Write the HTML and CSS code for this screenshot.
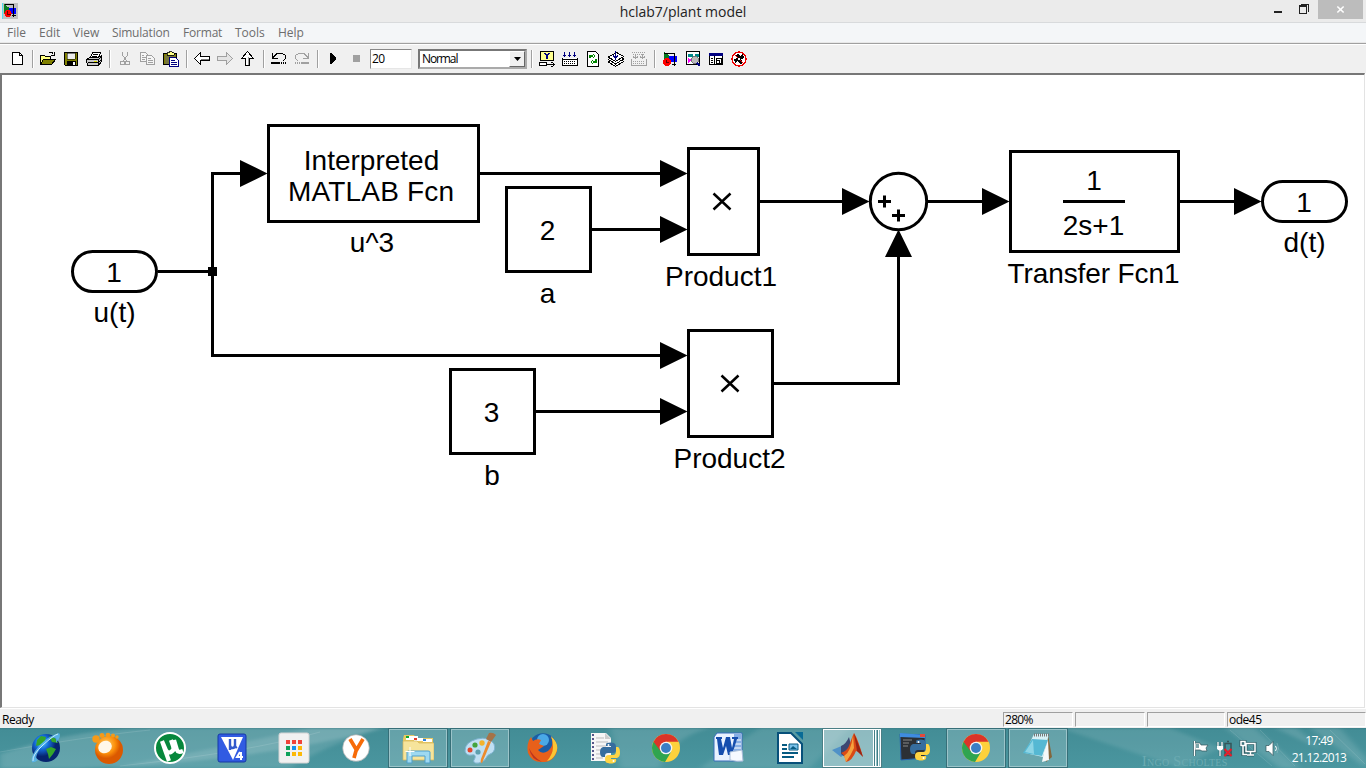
FILE: index.html
```html
<!DOCTYPE html>
<html lang="en">
<head>
<meta charset="utf-8">
<title>hclab7/plant model</title>
<link rel="stylesheet" href="styles.css">
</head>
<body>
<div class="desktop">
  <header class="titlebar">
    <svg class="app-icon" viewBox="0 0 16 16" shape-rendering="crispEdges"><path fill="#c0c0c0" d="M0 0h16v16H0z"/><path fill="#087a20" d="M2 1l7 5v5H2z"/><path fill="#00f" d="M7 5h7v6H7z"/><path fill="none" stroke="#000" d="M3 1.500h8.500V14M10 12.500h4"/><circle cx="6" cy="10.500" r="3.600" fill="#f00"/><path d="M5 8h1v3h3v1H5z" fill="#600"/><path d="M0 0h1v16H0z" fill="#5de"/></svg>
    <span class="title-text">hclab7/plant model</span>
    <div class="window-buttons">
      <svg class="win-min" viewBox="0 0 30 19"><path fill="#222" d="M14 11h8v2h-8z"/></svg>
      <svg class="win-max" viewBox="0 0 20 19" fill="none" stroke="#222" shape-rendering="crispEdges"><path d="M4.500 6.500h7v7h-7zM4 5.500h8M6 4.500h7.500V12"/></svg>
      <span class="win-close"><svg viewBox="0 0 10 10"><path d="M1.500 1.700l7 6.600M8.500 1.700l-7 6.600" stroke="#fff" stroke-width="1.800"/></svg></span>
    </div>
  </header>
  <nav class="menubar"><span class="m-file">File</span><span class="m-edit">Edit</span><span class="m-view">View</span><span class="m-sim">Simulation</span><span class="m-format">Format</span><span class="m-tools">Tools</span><span class="m-help">Help</span></nav>
  <div class="toolbar">
    <span class="tool"><svg viewBox="0 0 16 16"><path d="M3.500 1.500h7l3 3v9h-10z" fill="#fff" stroke="#000"/><path d="M10.500 1.500v3h3" fill="none" stroke="#000"/></svg></span>
    <i class="sep"></i>
    <span class="tool"><svg viewBox="0 0 16 16"><path d="M.500 13V4.500h4l1 1h5v3" fill="#ffff80" stroke="#000"/><path d="M.500 13.500l3-5h12l-4 5z" fill="#808000" stroke="#000"/><path d="M8.500 2.500q3-3 5 1M14 1v3h-3" fill="none" stroke="#000"/></svg></span>
    <span class="tool"><svg viewBox="0 0 16 16"><path d="M1.500 1.500h13v13h-12l-1-1z" fill="#808000" stroke="#000"/><path d="M4 2h8v6H4z" fill="#eee" stroke="#000" stroke-width=".5"/><path d="M4 10h9v4H4z"/><path d="M10 11h2v3h-2z" fill="#fff"/></svg></span>
    <span class="tool"><svg viewBox="0 0 16 16"><path d="M4.500 6.500l2-5h8l-2 5z" fill="#fff" stroke="#000"/><path d="M7 3.500h5M6 5.500h5" stroke="#000"/><path d="M.500 8.500l3-2h9l3-2v6l-3 4h-11z" fill="#c8c8c8" stroke="#000"/><path d="M1 8.500h11.500v5M2 11.500h10" stroke="#000" fill="none"/><path d="M8 10h3v1H8z" fill="#dd0"/><path d="M13 8l2-2M13 11l2-2" stroke="#000"/></svg></span>
    <i class="sep"></i>
    <span class="tool"><svg viewBox="0 0 16 16" fill="none" stroke="#a0a0a0"><path d="M5.500 1v3l4 6M10.500 1v3l-4 6"/><circle cx="5.500" cy="12" r="2"/><circle cx="10.500" cy="12" r="2"/></svg></span>
    <span class="tool"><svg viewBox="0 0 16 16" fill="#f5f5f5" stroke="#a0a0a0"><path d="M.500 1.500h5l3 3v6h-8zM2 4.500h2M2 6.500h4M2 8.500h3"/><path d="M6.500 4.500h5l3 3v6h-8zM8 7.500h3M8 9.500h5M8 11.500h5"/></svg></span>
    <span class="tool"><svg viewBox="0 0 16 16"><path d="M.500 2.500h13v11H.500z" fill="#808000" stroke="#000"/><path d="M2 4h10v9H2z" fill="#77773c"/><path d="M4 3V1.500h2v-1h3v1h2V4H4z" fill="#ff8" stroke="#000" stroke-width=".8"/><path d="M6.500 6.500h6l3 3v6h-9z" fill="#fff" stroke="#000080"/><path d="M8 9.500h4M8 11.500h6M8 13.500h6" stroke="#000080"/></svg></span>
    <i class="sep"></i>
    <span class="tool"><svg viewBox="0 0 16 16"><path d="M.500 7.500l6-6v4h9v4h-9v4z" fill="#fff" stroke="#000"/><path d="M7 8.500h8" stroke="#777"/></svg></span>
    <span class="tool"><svg viewBox="0 0 16 16"><path d="M15.500 7.500l-6-6v4h-9v4h9v4z" fill="#e4e4e4" stroke="#a0a0a0"/></svg></span>
    <span class="tool"><svg viewBox="0 0 16 16"><path d="M7.500.500l-6 7h4v7h4v-7h4z" fill="#fff" stroke="#000"/><path d="M8.500 6v8" stroke="#999"/></svg></span>
    <i class="sep"></i>
    <span class="tool"><svg viewBox="0 0 16 16" fill="none" stroke="#000"><path d="M3 5.500L6.500 2h4L14.500 4.500v3L12 10M1.500 2v5.500H7M1.500 7l3-3"/><path stroke-width="2" d="M0 12h9M10 12h1M12 12h1M14 12h1"/></svg></span>
    <span class="tool"><svg viewBox="0 0 16 16" fill="none" stroke="#a0a0a0"><path d="M13 5.500L9.500 2h-4L1.500 4.500v3L4 10M14.500 2v5.500H9M14.500 7l-3-3"/><path stroke-width="2" d="M1 12h1M3 12h1M5 12h1M7 12h8"/></svg></span>
    <i class="sep"></i>
    <span class="tool"><svg viewBox="0 0 16 16"><path d="M5 2h1l5 5v1l-5 5H5z"/></svg></span>
    <span class="tool"><svg viewBox="0 0 16 16"><path d="M5 4h7v7H5z" fill="#a0a0a0"/></svg></span>
    <span class="time-field">20</span>
    <span class="mode-select"><span class="mode-value">Normal</span><span class="mode-arrow"><svg viewBox="0 0 7 4"><path d="M0 0h7L3.500 4z"/></svg></span></span>
    <i class="sep"></i>
    <span class="tool"><svg viewBox="0 0 16 16" fill="none" stroke="#000"><path fill="#ffff90" d="M1.500.500h13v9h-13z"/><path d="M6 2l2 3 2-3M8 5v3" stroke="#000080" stroke-width="1.600"/><path d="M.500 11.500h7v3h-7zM8 13.500h7M12.500 11l3 2.500-3 2.500" fill="#fff"/></svg></span>
    <span class="tool"><svg viewBox="0 0 16 16"><path d="M2.500 1v5M7.500 1v5M12.500 1v5M1 4.500h3M6 4.500h3M11 4.500h3" stroke="#000080" fill="none"/><path d="M.500 7v7.500h15V7M1 8.500h14" fill="#fff" stroke="#000"/><path d="M2 10.500h12M2 12.500h12" stroke="#000" stroke-dasharray="1 1"/></svg></span>
    <span class="tool"><svg viewBox="0 0 16 16"><path d="M2.500.500h8l3 3v12h-11z" fill="#fff" stroke="#000"/><path d="M5 7V5h3M8 3l2 2-2 2M11 8v3H8M8 9l-2 2 2 2" stroke="#080" stroke-width="1.200" fill="none"/></svg></span>
    <span class="tool"><svg viewBox="0 0 16 16" fill="#fff" stroke="#000"><path d="M.500 11l7 4.500 8-5-7-4z"/><path d="M.500 8.500l7 4.500 8-5-7-4z"/><path d="M.500 6l7 4.500 8-5-7-4z"/><path d="M7.500 0v7M5 4.500l2.500 3 2.500-3" fill="#000080" stroke="#000080" stroke-width="1.500"/></svg></span>
    <span class="tool"><svg viewBox="0 0 16 16" fill="none" stroke="#a0a0a0"><path stroke-dasharray="1 1" d="M1 1.500h14M2 3.500h12"/><path d="M4.500 3v5M2 5.500l2.500 2 2.500-2M11.500 3v5M9 5.500l2.500 2 2.500-2M.500 8v6.500h15V8"/><path d="M2 10.500h12M2 12.500h12" stroke-dasharray="1 1"/></svg></span>
    <i class="sep"></i>
    <span class="tool"><svg viewBox="0 0 16 16"><path fill="#087a20" d="M2 1l6 4v5H2z"/><path fill="#00f" d="M7 5h8v6H7z"/><path fill="none" stroke="#000" d="M2 2.500h10.500V15M10 13.500h4"/><circle cx="5" cy="11" r="4" fill="#f00"/><path d="M4 9v2h3" stroke="#600" fill="none"/></svg></span>
    <span class="tool"><svg viewBox="0 0 16 16"><path d="M1.500.500h13v13h-13z" fill="#fff" stroke="#000"/><path d="M3 3h5v3H3zM10 3h4v3h-4z" fill="#088"/><path d="M3 7l4 2-4 3z" fill="#f0f"/><circle cx="10" cy="9" r="3.500" fill="#bbb" stroke="#777"/><path d="M12 12l3 3" stroke="#000080" stroke-width="2"/></svg></span>
    <span class="tool"><svg viewBox="0 0 16 16"><path d="M1.500 2.500h13v11h-13z" fill="#fff" stroke="#000"/><path d="M1 2h14v3H1z" fill="#000080"/><path d="M3 7.500h2M3 9.500h2M3 11.500h2M6.500 5v8M8.500 7.500h5v5h-5zM8 9.500h3v3" stroke="#000" fill="none"/></svg></span>
    <span class="tool"><svg viewBox="0 0 16 16"><circle cx="8" cy="8" r="7" fill="#fff" stroke="#e00" stroke-width="1.300"/><path d="M7 7L4 5l3-2 2 2 3-2 1 4-3 1 2 4-3 1-2-3-3 2-1-4z"/><path d="M3 3l10 10" stroke="#e00" stroke-width="1.300"/><path d="M7 7h2v2H7z" fill="#fff"/></svg></span>
  </div>
  <main class="canvas">
    <svg class="diagram" viewBox="2 75 1362 632">
      <g class="wire">
        <path d="M158 271.500H212.500M240 173.500H212.500V355.500H662M480 173.500H662M591 229.500H662M536 411.500H662M760 201.500H844M774 383.500H898.500V256M928 201.500H984M1180 201.500H1236"/>
      </g>
      <g class="block" shape-rendering="crispEdges">
        <path d="M268.500 125.500h210v96h-210zM506.500 187.500h84v84h-84zM450.500 369.500h84v84h-84zM688.500 148.500h70v106h-70zM688.500 330.500h84v106h-84zM1010.500 151.500h168v100h-168z"/>
      </g>
      <g class="block"><rect x="72.500" y="251.500" width="84" height="40" rx="20"/><rect x="1262.500" y="181.500" width="84" height="40" rx="20"/><circle cx="898.500" cy="201.500" r="28.200"/></g>
      <g class="solid"><path d="M208 267h9v9h-9zM240 160l27.500 13.500-27.500 13.500zM660 160l27.500 13.500-27.500 13.500zM660 216l27.500 13.500-27.500 13.500zM660 342l27.500 13.500-27.500 13.500zM660 398l27.500 13.500-27.500 13.500zM842 188l27.500 13.500-27.500 13.500zM982 188l27.500 13.500-27.500 13.500zM1234 188l27.500 13.500-27.500 13.500zM885 257l13.500-27.500 13.500 27.500z"/></g>
      <g class="mark"><path d="M713.500 193.500l17 16M730.500 193.500l-17 16M721.500 375.500l17 16M738.500 375.500l-17 16"/></g>
      <g class="wire"><path d="M878 201.500h13M884.500 195.500v12M892 215.500h13M898.500 209.500v12M1063 201.500h62"/></g>
      <g class="label">
        <text x="371.500" y="170">Interpreted</text><text x="371" y="201" textLength="166">MATLAB Fcn</text><text x="372" y="252">u^3</text>
        <text x="114" y="281.500">1</text><text x="114.500" y="322">u(t)</text>
        <text x="547.500" y="240">2</text><text x="547.500" y="303">a</text>
        <text x="491.500" y="422">3</text><text x="492" y="485">b</text>
        <text x="721" y="286">Product1</text><text x="729.500" y="468">Product2</text>
        <text x="1094" y="190">1</text><text x="1093.500" y="235">2s+1</text><text x="1093.500" y="283" textLength="172">Transfer Fcn1</text>
        <text x="1304" y="211.500">1</text><text x="1304.500" y="252">d(t)</text>
      </g>
    </svg>
  </main>
  <div class="statusbar"><span class="ready">Ready</span><span class="cell">280%</span><span class="cell"></span><span class="cell wide"></span><span class="cell solver">ode45</span></div>
  <footer class="taskbar">
    <svg class="wallpaper" viewBox="0 0 1366 40" preserveAspectRatio="none">
      <defs>
        <filter id="soft" x="-5%" y="-20%" width="110%" height="140%"><feGaussianBlur stdDeviation="3 1.500"/></filter>
      </defs>
      <g fill="#fff" filter="url(#soft)"><path opacity=".15" d="M0 26Q70 2 145 0H385Q250 35 80 40H0z"/><path opacity=".12" d="M110 40Q210 22 310 0h70Q320 20 290 40zM610 0h100q-40 10-50 40h-40z"/><path opacity=".1" d="M700 40l60-40h90l-40 40zM1060 0h110l50 20-40 20z"/><path opacity=".13" d="M1225 0h30l45 40h-20zM1275 0h22l25 22zM1310 0h30l26 30v10z"/></g>
      <g stroke="#fff" stroke-width="1" opacity=".12" fill="none"><path d="M0 24Q90 8 150 2M120 38Q250 24 320 4M1230 2l42 36M1260 2l35 36M1330 2l35 34"/></g>
    </svg>
    <div class="tasks">
      <span class="task"><svg viewBox="0 0 32 32"><defs><radialGradient id="globe" cx=".35" cy=".3"><stop offset="0" stop-color="#5ad4ff"/><stop offset=".5" stop-color="#1469d6"/><stop offset="1" stop-color="#06246f"/></radialGradient></defs><circle cx="16" cy="16" r="14" fill="url(#globe)"/><path d="M7 8l4-4 5 1-1 4-5 4-4 1zM16 17l5-2 5 2-3 5-4 5-1-5zM19 4l6 2 3 5-6-1z" fill="#35a52b"/><path d="M2 30Q0 24 9 14T29 1q3 3-3 10 1-6-4-5Q14 9 9 18T8 28q-4 3-6 2z" fill="#58b6f0" opacity=".85"/><path d="M3 29q-1-6 10-16T28 2" stroke="#c8eeff" fill="none"/></svg></span>
      <span class="task"><svg viewBox="0 0 32 32"><defs><radialGradient id="gom" cx=".4" cy=".3"><stop offset="0" stop-color="#ffd169"/><stop offset=".65" stop-color="#fb8e0b"/><stop offset="1" stop-color="#db5900"/></radialGradient></defs><circle cx="17" cy="18" r="14" fill="url(#gom)"/><ellipse cx="13" cy="15" rx="7" ry="6" fill="#fff7e9" transform="rotate(-30 13 15)"/><g fill="#f69a18"><circle cx="4" cy="7" r="3.700"/><circle cx="10" cy="3.500" r="2.500"/><circle cx="16" cy="3" r="2.300"/><circle cx="21" cy="3.500" r="2"/><circle cx="25" cy="5" r="1.700"/></g></svg></span>
      <span class="task"><svg viewBox="0 0 32 32"><circle cx="16" cy="16" r="15" fill="#07873c" stroke="#fff" stroke-width="2"/><path d="M8 9l3 7q2 6 6 4t2-6l-2-6M20 8l3 10q1 3 6 1M8 9q3 9 7 20" stroke="#fff" stroke-width="4.200" fill="none"/></svg></span>
      <span class="task"><svg viewBox="0 0 32 32"><rect x="2" y="2" width="28" height="28" rx="2" fill="#315be2" stroke="#173ba4"/><path d="M5 5h22L17 28z" fill="#fff"/><path d="M14 7v11M14 7v6q0 3 2.500 3t2.500-3V7M19 13q0 3 2 2" fill="none" stroke="#3159cc" stroke-width="2.400"/><path d="M24 20l-3 5h6M25 20v8" fill="none" stroke="#fff" stroke-width="2"/></svg></span>
      <span class="task"><svg viewBox="0 0 32 32"><rect x="1" y="1" width="30" height="30" rx="2" fill="#f1f1f1" stroke="#d3d3d3"/><path d="M8 8h4v4H8zM14 8h4v4h-4zM20 8h4v4h-4z" fill="#f04339"/><path d="M8 14h4v4H8zM8 20h4v4H8z" fill="#0ea25b"/><path d="M14 14h4v4h-4z" fill="#1492ee"/><path d="M20 14h4v4h-4zM14 20h4v4h-4zM20 20h4v4h-4z" fill="#fcb908"/></svg></span>
      <span class="task"><svg viewBox="0 0 32 32"><circle cx="16" cy="16" r="13.300" fill="#fff" stroke="#aaa" stroke-width=".7"/><path d="M10 7l6.500 11L23 7M16.500 17L14 26" fill="none" stroke="#f76b08" stroke-width="3.700"/></svg></span>
      <span class="task open"><svg viewBox="0 0 32 32"><path d="M1 7l1-4h10l2 3h17v21H1z" fill="#e8c963"/><path d="M4 4h12v4H4zM12 6h9v3h-9zM21 7h9v3h-9z" fill="#fff"/><path d="M4 4h3v2H4z" fill="#0ba82c"/><path d="M12 6h3v2h-3z" fill="#e33b28"/><path d="M21 7h3v2h-3z" fill="#2f83de"/><path d="M1 9h14l2 2h15v17H1z" fill="#f6e49b" stroke="#d6b656" stroke-width=".7"/><path d="M5 31V20q0-1 2-1h19q2 0 2 1v11h-5v-7H10v7z" fill="#9ed9f1" stroke="#4f9fcb"/><path d="M8 15v9M3.500 19.500h9" stroke="#fff"/></svg></span>
      <span class="task open"><svg viewBox="0 0 32 32"><path d="M1 19Q1 10 13 7t17 5q2 6-2 9-5 2-6 5t-7 5Q7 32 11 26q1-4-3-3-6 1-7-4z" fill="#c0e0f3" stroke="#80b4d2"/><circle cx="6" cy="18" r="2.500" fill="#e1482e"/><circle cx="11" cy="13" r="2.600" fill="#44a43e"/><circle cx="18" cy="11" r="2.700" fill="#f3b32c"/><circle cx="14" cy="20" r="2.600" fill="#5d9fae"/><path d="M27 10l-9 21q-2 0-1-4l7-18z" fill="#ec8b2d"/><path d="M22 7l3-6q4-1 7 2l-5 7z" fill="#a57348"/></svg></span>
      <span class="task"><svg viewBox="0 0 32 32"><circle cx="17" cy="15" r="13.800" fill="#1a5da6"/><circle cx="17" cy="8" r="6" fill="#4aa9e6"/><path d="M25 5q9 8 5 17-5 9-13 8Q6 31 2 21 0 12 5 5l2 4q4-3 8-1l-2 4 5 2-6 4q4 5 10 1 7-6 3-14z" fill="#e8601a"/><path d="M25 4q10 9 4 19-3 5-8 6 6-7 6-14 0-6-2-11z" fill="#f9c634"/><path d="M3 16q2 12 13 14Q7 25 3 16z" fill="#bd3420"/></svg></span>
      <span class="task"><svg viewBox="0 0 32 32"><path d="M3 1h15l5 5v23H3z" fill="#f6f6f6"/><path d="M17 1v6h6" fill="#ccc"/><path d="M5 2v26" stroke="#558" stroke-width="2" stroke-dasharray="2 2"/><path d="M8 6h8M8 10h12M8 14h10M8 18h5M8 22h5M8 26h7" stroke="#bbb"/><use href="#python"/></svg></span>
      <span class="task"><svg viewBox="0 0 32 32"><defs><symbol id="chrome" viewBox="0 0 32 32"><circle cx="16" cy="16" r="14" fill="#fdd13c"/><path d="M16 16L3.500 9.700A14 14 0 0 0 15 30l6-10z" fill="#2fa450"/><path d="M3.500 9.700A14 14 0 0 1 28.500 9.700H16L10.500 19z" fill="#db3428"/><circle cx="16" cy="16" r="6.300" fill="#f5f5f5"/><circle cx="16" cy="16" r="5" fill="#397ec5"/></symbol></defs><use href="#chrome"/></svg></span>
      <span class="task"><svg viewBox="0 0 32 32"><path d="M5 1h25v28H2V5z" fill="#e9f2ff" stroke="#376dba"/><path d="M22 2h7v26h-7z" fill="#87aee5"/><path d="M22 8h7M22 12h7M22 16h7M22 20h7" stroke="#fff"/><path d="M4 5h6v2H9l2 9 3-11h4l2 11 2-9h-2V5h6v2h-1l-5 16h-4l-2-9-3 9H7L5 7H4z" fill="#164eae"/><path d="M18 20l12-2 1 11q-6 1-13-1z" fill="#f6f9ff" stroke="#a9bed8"/></svg></span>
      <span class="task"><svg viewBox="0 0 32 32"><path d="M4 1h13l11 11v19H4z" fill="#fff" stroke="#07507a" stroke-width="2"/><path d="M21 0h8v8z" fill="#086b96"/><path d="M8 13h5M8 17h5M8 21h16M8 25h12" stroke="#075b82" stroke-width="2"/><path d="M15 12h9v6h-9z" fill="#78bfe8" stroke="#075b82"/><path d="M16 17l3-3 4 3z" fill="#075b82"/></svg></span>
      <span class="task current"><svg viewBox="0 0 32 32"><path d="M0 18l12-5 6 5-9 7z" fill="#4f91c7"/><path d="M9 14q5-2 8-9l3 12-7 8-4-3z" fill="#3c4772"/><path d="M22 1q-2 4-5 13-2 5-8 7 4 2 5 9 6-1 10-11 4 1 7 6-5-18-9-24z" fill="#d94a16"/><path d="M21 3l1 13q-3 7-8 14l-2-6q7-4 9-21z" fill="#f5a13d"/><path d="M22 1q6 15 9 24l-6-6z" fill="#9a2414"/></svg></span>
      <span class="task"><svg viewBox="0 0 32 32"><defs><symbol id="python" viewBox="0 0 32 32"><path d="M19 11q4-1 7 0 2 1 2 4v3q0 3-3 3h-5q-3 0-3 3v1h-2q-3 0-3-5 0-4 3-5h8v-1h-5v-1q0-2 1-2z" fill="#366d9e"/><path d="M28 15h2q2 1 2 6 0 4-3 5h-6v1h5q1 3-2 4-3 1-6 0-3 0-3-4 0-4 4-4h4q3 0 3-4z" fill="#ffd443"/><circle cx="20.500" cy="13" r="1" fill="#fff"/><circle cx="25.500" cy="29" r="1" fill="#fff"/></symbol></defs><path d="M2 2l25 1v23L3 28z" fill="#2c3035" stroke="#2764b0"/><path d="M2 1l25 2v3L2 5z" fill="#3f8ce0"/><path d="M22 2h5v3h-5z" fill="#e44a3b"/><path d="M5 8h9M5 11h6M5 14h5" stroke="#888"/><use href="#python" y="-3"/></svg></span>
      <span class="task open"><svg viewBox="0 0 32 32"><use href="#chrome"/></svg></span>
      <span class="task open"><svg viewBox="0 0 32 32"><path d="M26 3l4 22-6 5z" fill="#83663c"/><path d="M12 2h15l-6 23-18-4z" fill="#d5f0f5"/><path d="M10 7l16 1-6 16-19-3z" fill="#55b8d3"/><path d="M11 8L3 20l9 2z" fill="#b2e8f2" opacity=".6"/><path d="M26 8l1 20-7 2 2-10z" fill="#f4f8f8"/><path d="M12 3h15" stroke="#777" stroke-width="3" stroke-dasharray="1 1"/></svg></span>
    </div>
    <span class="signature">Ingo Scholtes</span>
    <div class="tray">
      <svg viewBox="0 0 18 18" fill="none" stroke="#fff" stroke-width="1.400"><path d="M3.500 2v15" stroke="#2d5f67" stroke-width="3"/><path d="M4 4h5l1 2h7l-2 3 1 3h-5l-2-1H4z" fill="#fff" stroke="#31555a" stroke-width=".7"/><path d="M5 5h3v4H5z" fill="#7ca5aa" stroke="none"/><path d="M3.500 2v15"/></svg>
      <svg viewBox="0 0 18 18" fill="none" stroke="#fff" stroke-width="1.300"><path d="M3 3v4M7 3v4M5 10v7" stroke="#2d5f67" stroke-width="2.500"/><path d="M10 4.500h6v12h-6zM12 2.500h2" stroke="#35565a" stroke-width="1.500"/><path d="M3 3v4M7 3v4M5 10v7"/><path d="M2 7h6v3q-3 3-6 0z" fill="#fff" stroke="none"/><path d="M9.500 10l7 7M16.500 10l-7 7" stroke="#e61e2a" stroke-width="2.200"/></svg>
      <svg viewBox="0 0 18 18" fill="none" stroke="#fff" stroke-width="1.500"><path d="M7 4.500h9v8H7zM11.500 13v3M8 16h7M2 2.500h4v4H2zM4 7v8.500h4" stroke="#2d5f67" stroke-width="3"/><path d="M7 4.500h9v8H7zM11.500 13v3M8 16h7M2 2.500h4v4H2zM4 7v8.500h4"/></svg>
      <svg viewBox="0 0 18 18" fill="none" stroke="#fff"><path d="M3 6.500h3l4-4v14l-4-4H3z" fill="#fff" stroke="#31555a" stroke-width=".7"/><path d="M12.500 7q2 2.500 0 5"/><path d="M14 4q3 5 0 10" opacity=".2"/></svg>
    </div>
    <div class="clock"><span>17:49</span><span>21.12.2013</span></div>
  </footer>
</div>
</body>
</html>
```

FILE: styles.css
```css
body {
  margin: 0;
  background: #fff;
  font-family: "Open Sans", "Noto Sans", sans-serif;
}

.desktop {
  display: flex;
  flex-direction: column;
  width: 1366px;
  height: 768px;
  overflow: hidden;
}

.titlebar {
  box-sizing: border-box;
  display: grid;
  grid-template-columns: 120px 1fr 120px;
  height: 23px;
  background: #ebebeb;
  border-bottom: 1px solid #d8dadc;
}

.app-icon {
  width: 16px;
  height: 16px;
  margin: 3px 2px;
}

.title-text {
  text-align: center;
  font-size: 14px;
  line-height: 24px;
  color: #222;
}

.window-buttons {
  display: flex;
  justify-content: flex-end;
}

.win-min {
  width: 30px;
  height: 19px;
}

.win-max {
  width: 20px;
  height: 19px;
  margin: 0 3px 0 5px;
}

.win-close {
  display: flex;
  justify-content: center;
  align-items: center;
  width: 45px;
  height: 19px;
  margin-right: 3px;
  background: #bcbcbc;
}

.win-close svg {
  width: 9px;
  height: 9px;
}

.menubar {
  display: grid;
  grid-template-columns: 32px 34px 39px 71px 52px 43px 60px;
  box-sizing: border-box;
  height: 20px;
  padding-left: 7px;
  border-bottom: 1px solid #e8e8e8;
  background: #f4f6f8;
  color: #6d6d6d;
  font-size: 12px;
  line-height: 19px;
}

.m-sim,
.m-format {
  letter-spacing: -0.2px;
}

.toolbar {
  box-sizing: border-box;
  display: flex;
  align-items: center;
  height: 30px;
  padding: 0 0 0 5px;
  background: #f0f0f0;
  border-top: 1px solid #a0a0a0;
  box-shadow: inset 0 1px #fff;
}

.tool {
  display: flex;
  justify-content: center;
  width: 23px;
}

.tool svg {
  width: 16px;
  height: 16px;
  shape-rendering: crispEdges;
}

.sep {
  box-sizing: border-box;
  width: 2px;
  height: 18px;
  margin: 0 2px 0 4px;
  border-left: 1px solid #a0a0a0;
  border-right: 1px solid #fff;
}

.time-field,
.mode-select {
  box-sizing: border-box;
  height: 20px;
  background: #fff;
  border: 1px solid;
  border-color: #888 #e6e6e6 #e6e6e6 #888;
  font-size: 12px;
  line-height: 18px;
}

.time-field {
  width: 42px;
  margin-left: 3px;
  padding-left: 1px;
  letter-spacing: -0.6px;
}

.mode-select {
  display: flex;
  justify-content: space-between;
  width: 109px;
  margin: 0 0 0 6px;
  border-width: 2px;
  border-color: #777 #aaa #aaa #777;
}

.mode-value {
  padding-left: 2px;
  line-height: 16px;
  letter-spacing: -1.1px;
}

.mode-arrow {
  display: flex;
  justify-content: center;
  align-items: center;
  box-sizing: border-box;
  width: 16px;
  background: #f0f0f0;
  border: 1px solid;
  border-color: #fff #666 #666 #fff;
}

.mode-arrow svg {
  width: 7px;
  height: 4px;
}

.canvas {
  box-sizing: border-box;
  height: 635px;
  margin-right: 1px;
  background: #fff;
  border: solid;
  border-width: 2px 1px 1px 2px;
  border-color: #777 #e3e3e3 #e3e3e3 #777;
}

.diagram {
  display: block;
  width: 1362px;
  height: 632px;
}

.wire,
.block,
.mark {
  fill: none;
  stroke: #000;
  stroke-width: 3;
}

.mark {
  stroke-width: 2.5;
}

.label {
  font-family: "Liberation Sans", Arial, sans-serif;
  font-size: 28px;
  text-anchor: middle;
}

.statusbar {
  box-sizing: border-box;
  display: flex;
  height: 20px;
  padding: 3px 0 1px;
  background: #f0f0f0;
  border-top: 1px solid #fff;
  font-size: 12px;
  line-height: 15px;
}

.ready {
  width: 1001px;
  padding-left: 2px;
  letter-spacing: -0.5px;
}

.cell {
  box-sizing: border-box;
  width: 70px;
  margin-right: 2px;
  padding-left: 1px;
  border: 1px solid;
  border-color: #a0a0a0 #fff #fff #a0a0a0;
  letter-spacing: -0.7px;
  line-height: 13px;
}

.wide {
  width: 78px;
}

.solver {
  width: 139px;
  margin: 0;
  letter-spacing: -0.5px;
}

.taskbar {
  position: relative;
  display: flex;
  height: 40px;
  background: linear-gradient(#3c7f88 0, #438d96 2px, #4a969f 100%);
}

.wallpaper {
  position: absolute;
  inset: 0;
  width: 1366px;
  height: 40px;
}

.tasks {
  position: relative;
  display: flex;
  width: 1142px;
  padding-left: 15px;
  box-sizing: border-box;
}

.task {
  position: relative;
  box-sizing: border-box;
  display: flex;
  justify-content: center;
  align-items: center;
  width: 60px;
  height: 40px;
  margin: 0 1px;
}

.task svg {
  width: 32px;
  height: 32px;
}

.open {
  border: 1px solid #366f78;
  background: rgba(255, 255, 255, 0.18);
  box-shadow: inset 0 0 0 1px #9bc4c9;
}

.current {
  border: 1px solid #4b7f86;
  padding-right: 8px;
  background: linear-gradient(90deg, transparent 50px, #fff 50px 51px, #417e86 51px 52px, #fff 52px 53px, transparent 53px 54px, #417e86 54px 55px, #fff 55px 56px, transparent 56px), rgba(255, 255, 255, 0.4);
  box-shadow: inset 0 0 0 1px #fff;
}

.signature {
  position: absolute;
  left: 1142px;
  top: 26px;
  font: small-caps 14px/15px "Liberation Serif", serif;
  color: #6babb2;
  letter-spacing: 0.3px;
  white-space: nowrap;
}

.tray {
  position: relative;
  display: flex;
  align-items: center;
  gap: 6px;
  width: 140px;
  padding-left: 49px;
  box-sizing: border-box;
}

.tray svg {
  flex: none;
  width: 18px;
  height: 18px;
}

.clock {
  position: relative;
  display: flex;
  flex-direction: column;
  align-items: center;
  width: 74px;
  padding-top: 4px;
  color: #fff;
  font-size: 12px;
  line-height: 17px;
  letter-spacing: -0.65px;
}
```
